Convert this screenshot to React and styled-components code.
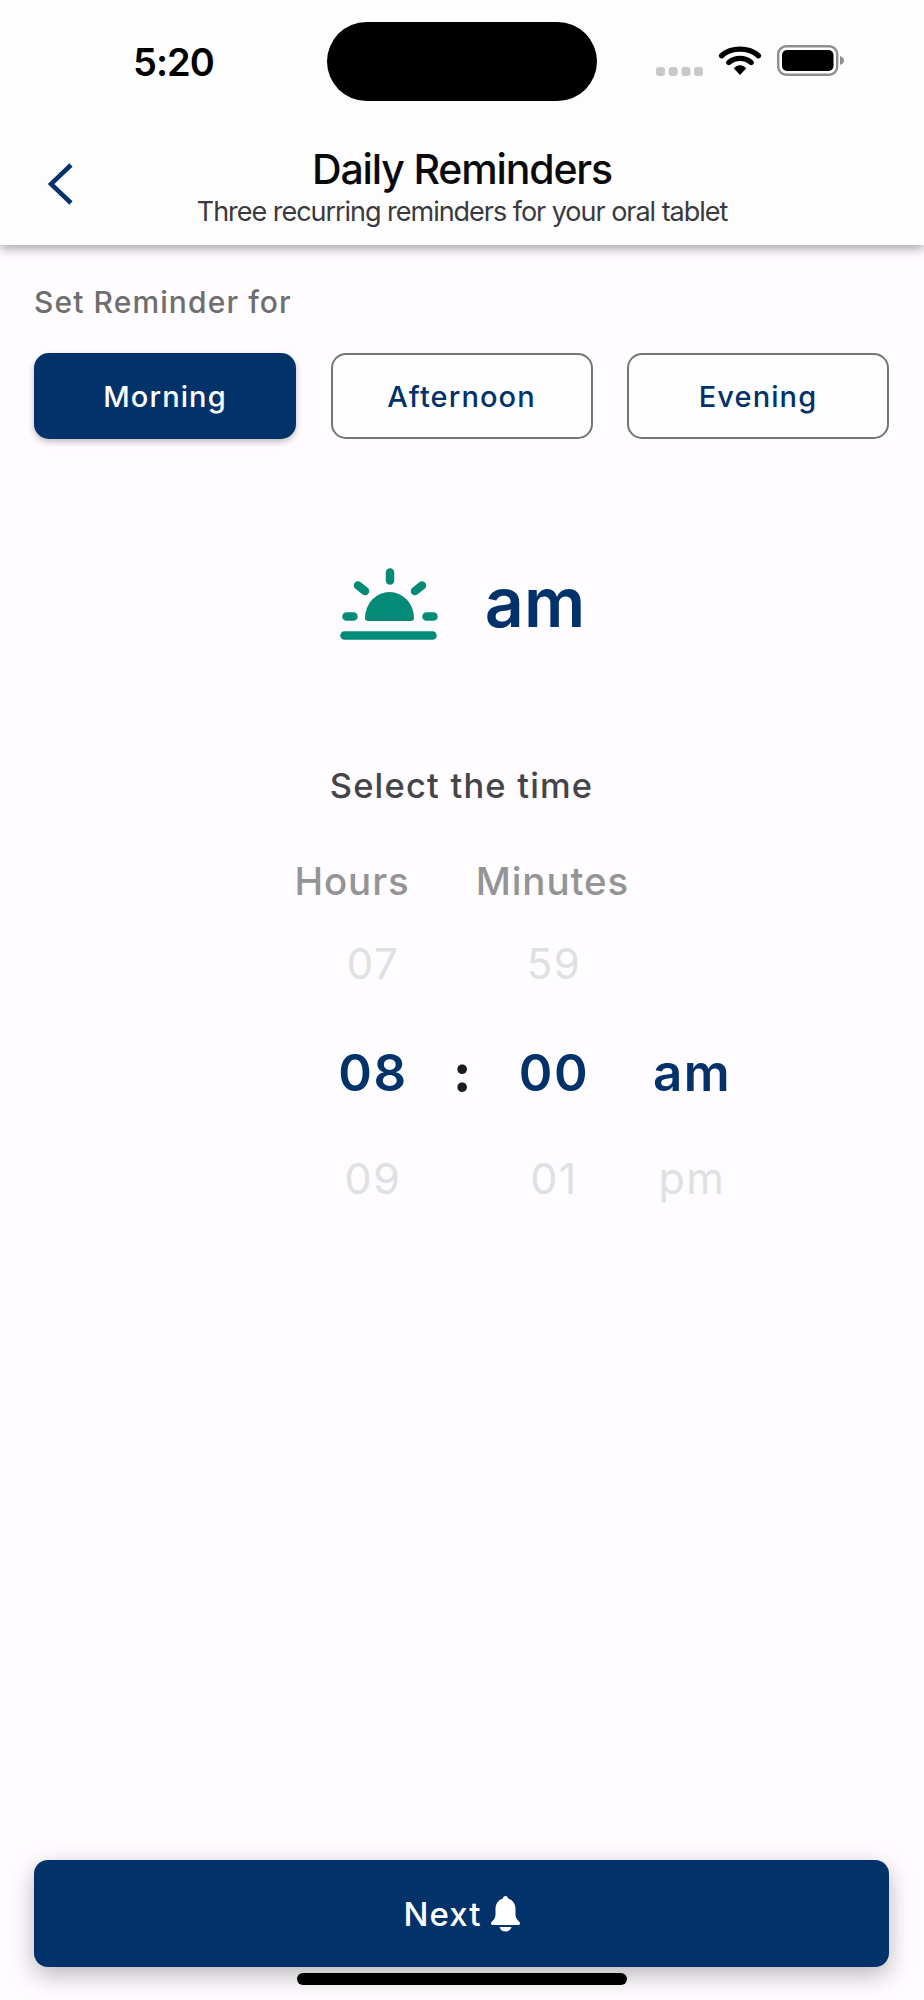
import React from "react";
import styled, { createGlobalStyle } from "styled-components";

const GlobalStyle = createGlobalStyle`
  html, body {
    margin: 0;
    padding: 0;
    background: #fefcfe;
  }
  * {
    box-sizing: border-box;
  }
`;

const NAVY = "#01326a";

const Page = styled.div`
  width: 924px;
  height: 2000px;
  display: flex;
  flex-direction: column;
  background: #fefcfe;
  font-family: Inter, "Noto Sans", sans-serif;
  overflow: hidden;
`;

const Header = styled.header`
  height: 245px;
  flex-shrink: 0;
  background: #fefdfe;
  box-shadow: 0 4px 10px rgba(0, 0, 0, 0.34);
  display: flex;
  flex-direction: column;
  position: relative;
  z-index: 1;
`;

const StatusBar = styled.div`
  height: 129px;
  padding-top: 22px;
  display: flex;
  align-items: flex-start;
`;

const Time = styled.div`
  width: 327px;
  padding: 18px 0 0 133px;
  font-size: 38px;
  line-height: 44px;
  font-weight: 600;
  letter-spacing: -1px;
  color: #000;
`;

const Island = styled.div`
  width: 270px;
  height: 79px;
  border-radius: 40px;
  background: #000;
`;

const StatusIcons = styled.div`
  flex: 1;
  padding: 22px 0 0 59px;
  display: flex;
  align-items: flex-start;
`;

const TitleRow = styled.div`
  flex: 1;
  display: flex;
  align-items: flex-start;
  position: relative;
`;

const BackIcon = styled.svg`
  position: absolute;
  left: 46px;
  top: 33px;
`;

const TitleBlock = styled.div`
  width: 100%;
  display: flex;
  flex-direction: column;
  align-items: center;
  padding-top: 17px;
`;

const Title = styled.h1`
  margin: 0;
  font-size: 41px;
  line-height: 46px;
  font-weight: 500;
  letter-spacing: -1.15px;
  color: #0a0a0c;
`;

const Subtitle = styled.p`
  margin: 3px 0 0;
  font-size: 27px;
  line-height: 34px;
  font-weight: 400;
  letter-spacing: -1.03px;
  color: #3a3a3e;
`;

const Content = styled.main`
  flex: 1;
  display: flex;
  flex-direction: column;
  padding: 0 35px 0 34px;
`;

const SectionLabel = styled.div`
  margin-top: 44px;
  font-size: 30px;
  line-height: 26px;
  font-weight: 500;
  letter-spacing: 1.1px;
  color: #6f6f6f;
`;

const Tabs = styled.div`
  margin-top: 38px;
  display: flex;
  justify-content: space-between;
`;

const Tab = styled.button`
  width: 262px;
  height: 86px;
  padding: 0;
  border-radius: 15px;
  border: ${(p) => (p.$active ? "none" : "2px solid #757578")};
  background: ${(p) => (p.$active ? NAVY : "#fffeff")};
  color: ${(p) => (p.$active ? "#fff" : NAVY)};
  box-shadow: ${(p) => (p.$active ? "0 3px 6px rgba(0,0,0,0.25)" : "none")};
  font-family: inherit;
  font-size: 29px;
  font-weight: 500;
  letter-spacing: 1.1px;
`;

const Period = styled.div`
  margin-top: 125px;
  display: flex;
  justify-content: center;
  align-items: center;
  gap: 46px;
  padding-left: 1px;
`;

const PeriodText = styled.div`
  font-size: 68px;
  line-height: 76px;
  font-weight: 600;
  color: ${NAVY};
`;

const SelectLabel = styled.div`
  margin-top: 126px;
  text-align: center;
  font-size: 34.5px;
  line-height: 40px;
  font-weight: 500;
  letter-spacing: 1.2px;
  color: #444548;
`;

const Picker = styled.div`
  margin: 53px 0 0 260px;
  display: grid;
  grid-template-columns: 158px 20px 164px 112px;
  justify-items: center;
`;

const ColumnHead = styled.div`
  margin-bottom: 10px;
  margin-right: ${(p) => p.$shift}px;
  font-size: 38.5px;
  line-height: 44px;
  font-weight: 500;
  letter-spacing: 0.9px;
  white-space: nowrap;
  color: #949497;
`;

const Cell = styled.div`
  display: flex;
  align-items: center;
  justify-content: center;
  height: ${(p) => p.$h}px;
  font-size: ${(p) => p.$size}px;
  font-weight: ${(p) => (p.$on ? 600 : 400)};
  letter-spacing: 1.5px;
  color: ${(p) => (p.$on ? NAVY : "#e0e0e3")};
`;

const Colon = styled(Cell)`
  margin-left: 2px;
  color: #1c1c20;
  font-weight: 800;
`;

const Footer = styled.footer`
  padding: 0 35px 15px 34px;
  display: flex;
  flex-direction: column;
  align-items: center;
`;

const NextButton = styled.button`
  width: 100%;
  height: 107px;
  padding: 0 0 0 2px;
  border: none;
  border-radius: 14px;
  background: ${NAVY};
  box-shadow: 0 8px 24px rgba(0, 0, 0, 0.28);
  color: #fff;
  font-family: inherit;
  font-size: 33px;
  font-weight: 500;
  letter-spacing: 1px;
  display: flex;
  align-items: center;
  justify-content: center;
  gap: 9px;
`;

const HomeBar = styled.div`
  margin-top: 6px;
  width: 330px;
  height: 12px;
  border-radius: 6px;
  background: #000;
  position: relative;
`;

const SignalIcon = () => (
  <svg width="47" height="9" viewBox="0 0 47 9" style={{ marginTop: 23 }}>
    {[0, 12.7, 25.4, 38].map((x) => (
      <rect key={x} x={x} width="9" height="9" rx="3" fill="#c8c8ca" />
    ))}
  </svg>
);

const WifiIcon = () => (
  <svg width="44" height="31" viewBox="0 0 44 32" style={{ marginLeft: 15, marginTop: 1 }}>
    <path d="M3 11 C13 2 31 2 41 11" fill="none" stroke="#000" strokeWidth="5.5" strokeLinecap="round" />
    <path d="M10.5 18 C17 12.5 27 12.5 33.5 18" fill="none" stroke="#000" strokeWidth="5.5" strokeLinecap="round" />
    <path d="M15.5 24 C19.5 20 24.5 20 28.5 24 L22 31 Z" fill="#000" />
  </svg>
);

const BatteryIcon = () => (
  <svg width="68" height="31" viewBox="0 0 68 31" style={{ marginLeft: 15, marginTop: 1 }}>
    <rect x="1.2" y="1.2" width="59" height="28.6" rx="8" fill="none" stroke="#8e8e90" strokeWidth="2.4" />
    <rect x="5" y="5" width="51.5" height="21" rx="5" fill="#000" />
    <path d="M63 11 C66 12 67 14 67 15.5 C67 17 66 19 63 20 Z" fill="#8e8e90" />
  </svg>
);

const SunIcon = () => (
  <svg width="100" height="76" viewBox="0 0 100 76" stroke="#068a78" strokeLinecap="round" strokeWidth="8.5">
    <line x1="51" y1="8.5" x2="51" y2="16.5" />
    <line x1="19" y1="21.5" x2="26" y2="27" />
    <line x1="83" y1="21.5" x2="76" y2="27" />
    <line x1="7.5" y1="52.5" x2="14.5" y2="52.5" />
    <line x1="87.5" y1="52.5" x2="94.5" y2="52.5" />
    <line x1="5.5" y1="71.5" x2="93.5" y2="71.5" />
    <path d="M26 54 A24.5 26 0 0 1 75 54 Q75 57 72 57 H29 Q26 57 26 54 Z" fill="#068a78" stroke="none" />
  </svg>
);

const BellIcon = () => (
  <svg width="31" height="36" viewBox="0 0 30 36" fill="#fff">
    <path d="M15 0 C16.5 0 17.5 1 17.5 2.5 C22.5 4 25 8 25 13 V19 C25 22 27 24 29 26 C30 27.5 29.5 29 27.5 29 H2.5 C0.5 29 0 27.5 1 26 C3 24 5 22 5 19 V13 C5 8 7.5 4 12.5 2.5 C12.5 1 13.5 0 15 0 Z" />
    <path d="M9 31 H21 C20 34 18 35.5 15 35.5 C12 35.5 10 34 9 31 Z" />
  </svg>
);

export default function App() {
  return (
    <Page>
      <GlobalStyle />
      <Header>
        <StatusBar>
          <Time>5:20</Time>
          <Island />
          <StatusIcons>
            <SignalIcon />
            <WifiIcon />
            <BatteryIcon />
          </StatusIcons>
        </StatusBar>
        <TitleRow>
          <BackIcon width="30" height="44" viewBox="0 0 30 44" fill="none">
            <path d="M25 3 L5 22 L25 41" stroke={NAVY} strokeWidth="4.5" />
          </BackIcon>
          <TitleBlock>
            <Title>Daily Reminders</Title>
            <Subtitle>Three recurring reminders for your oral tablet</Subtitle>
          </TitleBlock>
        </TitleRow>
      </Header>

      <Content>
        <SectionLabel>Set Reminder for</SectionLabel>
        <Tabs>
          <Tab $active>Morning</Tab>
          <Tab>Afternoon</Tab>
          <Tab>Evening</Tab>
        </Tabs>

        <Period>
          <SunIcon />
          <PeriodText>am</PeriodText>
        </Period>

        <SelectLabel>Select the time</SelectLabel>

        <Picker>
          <ColumnHead $shift={42}>Hours</ColumnHead>
          <span />
          <ColumnHead $shift={3}>Minutes</ColumnHead>
          <span />

          <Cell $h={100} $size={42}>07</Cell>
          <span />
          <Cell $h={100} $size={42}>59</Cell>
          <span />

          <Cell $h={118} $size={51} $on>08</Cell>
          <Colon $h={118} $size={52}>:</Colon>
          <Cell $h={118} $size={51} $on>00</Cell>
          <Cell $h={118} $size={51} $on>am</Cell>

          <Cell $h={94} $size={43}>09</Cell>
          <span />
          <Cell $h={94} $size={43}>01</Cell>
          <Cell $h={94} $size={43}>pm</Cell>
        </Picker>
      </Content>

      <Footer>
        <NextButton>
          Next
          <BellIcon />
        </NextButton>
        <HomeBar />
      </Footer>
    </Page>
  );
}
